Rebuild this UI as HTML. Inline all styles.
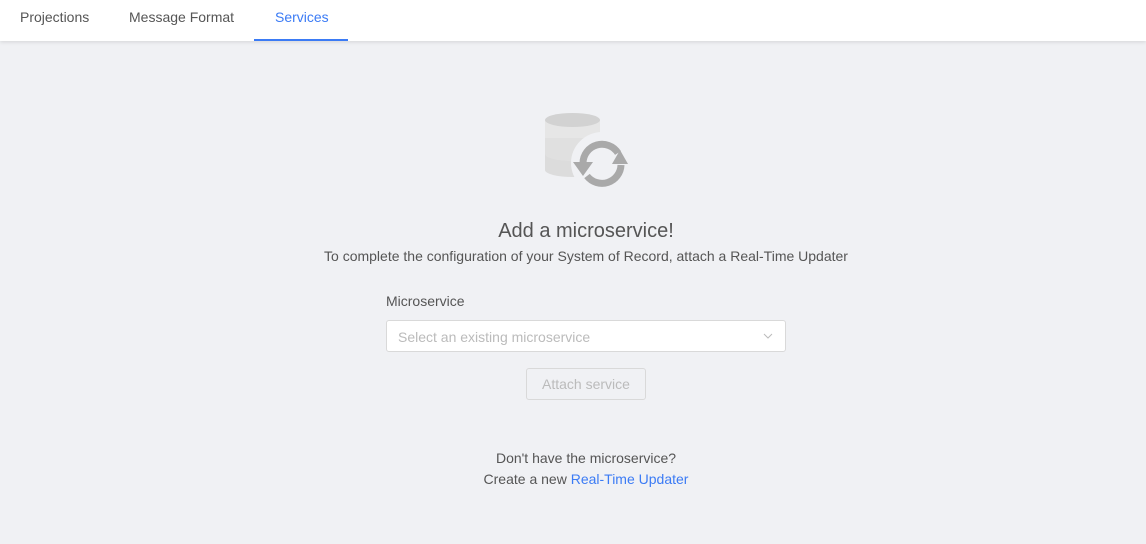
<!DOCTYPE html>
<html><head><style>
body{margin:0;width:1146px;height:544px;background:#f0f1f4;font-family:"Liberation Sans",sans-serif;position:relative;overflow:hidden}
.nav{position:absolute;left:0;top:0;width:1146px;height:41px;background:#fff;box-shadow:0 1px 4px rgba(0,0,0,.12)}
.tab{position:absolute;top:9px;font-size:14px;color:#555}
.ul{position:absolute;left:254px;top:39px;width:94px;height:2px;background:#3b7bf5}
.c{position:absolute;left:26px;width:1120px;text-align:center}
</style></head><body>
<div class="nav">
<div class="tab" style="left:20px">Projections</div>
<div class="tab" style="left:129px">Message Format</div>
<div class="tab" style="left:275px;color:#3b7bf5">Services</div>
<div class="ul"></div>
</div>
<svg style="position:absolute;left:530px;top:100px" width="110" height="95" viewBox="0 0 110 95">
<path d="M15 20 V70 A27.5 7 0 0 0 70 70 V20 Z" fill="#dcdcdc"/>
<path d="M15 20 V38 A27.5 7 0 0 0 70 38 V20 Z" fill="#e6e6e6"/>
<path d="M15 38 V54 A27.5 7 0 0 0 70 54 V38 Z" fill="#e0e0e0"/>
<ellipse cx="42.5" cy="20" rx="27.5" ry="7" fill="#d2d2d2"/>
<circle cx="72" cy="63" r="31" fill="#f0f1f4"/>
<path d="M53 63 A19 19 0 0 1 88 53" stroke="#a9a9a9" stroke-width="7" fill="none"/>
<path d="M91 65 A19 19 0 0 1 57 76" stroke="#a9a9a9" stroke-width="7" fill="none"/>
<path d="M43 62 L63 62 L53 76 Z" fill="#a9a9a9"/>
<path d="M82 64 L98 64 L90 50 Z" fill="#a9a9a9"/>
</svg>
<div class="c" style="top:220px;font-size:20px;color:#555">Add a microservice!</div>
<div class="c" style="top:248px;font-size:14px;color:#555">To complete the configuration of your System of Record, attach a Real-Time Updater</div>
<div style="position:absolute;left:386px;top:293px;font-size:14px;color:#555">Microservice</div>
<div style="position:absolute;left:386px;top:320px;width:398px;height:30px;background:#fff;border:1px solid #d9d9d9;border-radius:3px">
<span style="position:absolute;left:11px;top:8px;font-size:14px;color:#bbb">Select an existing microservice</span>
<svg style="position:absolute;right:12px;top:11px" width="10" height="8"><path d="M1 2 L5 6 L9 2" stroke="#bbb" fill="none"/></svg>
</div>
<div style="position:absolute;left:526px;top:368px;width:118px;height:30px;border:1px solid #d9d9d9;border-radius:3px;background:#f0f1f4;text-align:center;line-height:30px;font-size:14px;color:#bbb">Attach service</div>
<div class="c" style="top:450px;font-size:14px;color:#555">Don't have the microservice?</div>
<div class="c" style="top:471px;font-size:14px;color:#555">Create a new <span style="color:#3b7bf5">Real-Time Updater</span></div>
</body></html>
